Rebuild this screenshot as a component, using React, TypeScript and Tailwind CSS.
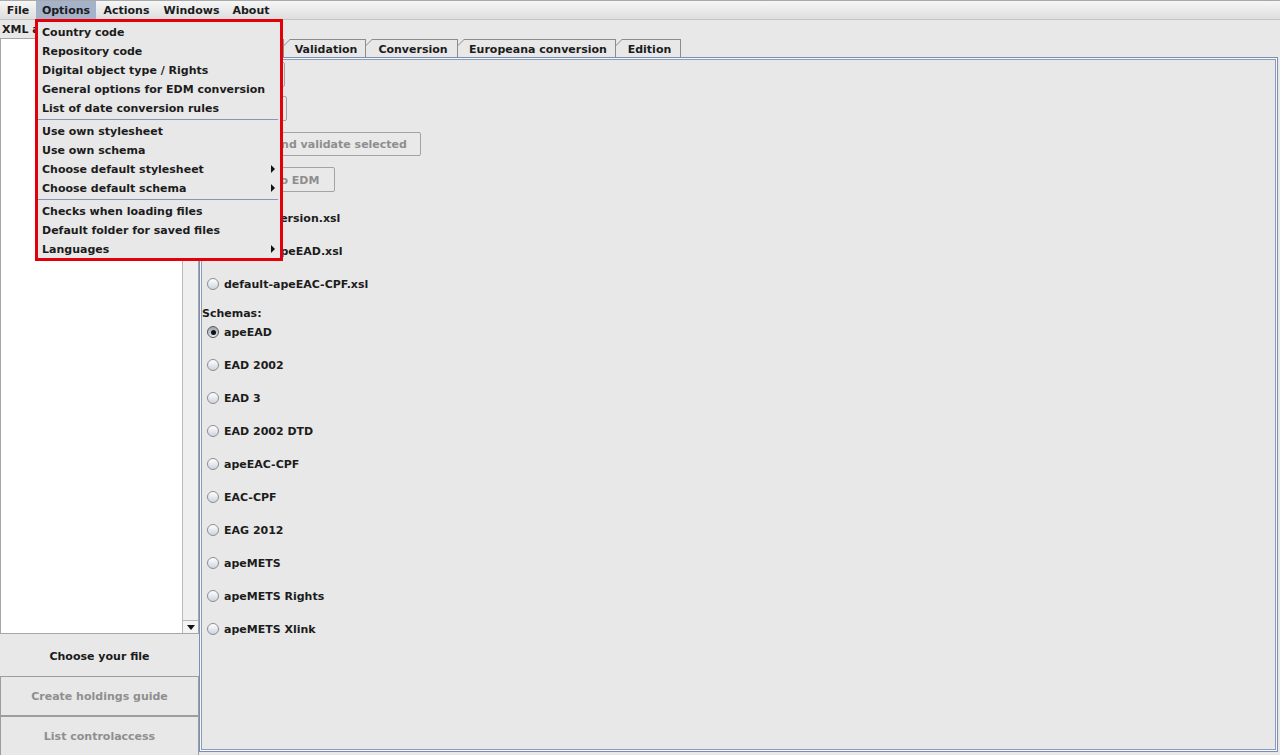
import React from "react";

const menuTop = [
  { label: "File", w: "w-[36px]", active: false },
  { label: "Options", w: "w-[60px]", active: true },
  { label: "Actions", w: "w-[61px]", active: false },
  { label: "Windows", w: "w-[69px]", active: false },
  { label: "About", w: "w-[50px]", active: false },
];

type Entry = { label?: string; sub?: boolean; sep?: boolean };
const dropdown: Entry[] = [
  { label: "Country code" },
  { label: "Repository code" },
  { label: "Digital object type / Rights" },
  { label: "General options for EDM conversion" },
  { label: "List of date conversion rules" },
  { sep: true },
  { label: "Use own stylesheet" },
  { label: "Use own schema" },
  { label: "Choose default stylesheet", sub: true },
  { label: "Choose default schema", sub: true },
  { sep: true },
  { label: "Checks when loading files" },
  { label: "Default folder for saved files" },
  { label: "Languages", sub: true },
];

const tabs = [
  { label: "Summary", w: "w-[81px]" },
  { label: "Validation", w: "w-[83px]" },
  { label: "Conversion", w: "w-[93px]" },
  { label: "Europeana conversion", w: "w-[159px]" },
  { label: "Edition", w: "w-[66px]" },
];

const schemas = [
  "apeEAD",
  "EAD 2002",
  "EAD 3",
  "EAD 2002 DTD",
  "apeEAC-CPF",
  "EAC-CPF",
  "EAG 2012",
  "apeMETS",
  "apeMETS Rights",
  "apeMETS Xlink",
];

function Radio({ checked, label }: { checked?: boolean; label: string }) {
  return (
    <div className="flex items-center h-[20px] pl-[5px]">
      <div
        className={
          checked
            ? "w-[12px] h-[12px] rounded-full border border-[#5a5a5a] bg-linear-to-b from-[#9aa3b0] to-[#e4e8ee] flex items-center justify-center"
            : "w-[12px] h-[12px] rounded-full border border-[#8d8d8d] bg-linear-to-b from-[#ffffff] to-[#cdd5e1]"
        }
      >
        {checked && <div className="w-[5px] h-[5px] rounded-full bg-[#111]" />}
      </div>
      <span className="ml-[5px] pt-px">{label}</span>
    </div>
  );
}

function Btn({ label, w, disabled, h, mt }: { label: string; w: string; disabled?: boolean; h: string; mt: string }) {
  return (
    <div
      className={`${w} ${h} ${mt} ml-[5px] border border-[#a3a3a3] rounded-[2px] flex items-center justify-center pt-px bg-[#e9e9e9] ${
        disabled ? "text-[#8e8e8e]" : "text-[#1a1a1a]"
      }`}
    >
      {label}
    </div>
  );
}

export default function App() {
  return (
    <div className="w-[1280px] h-[755px] bg-[#e8e8e8] relative overflow-hidden font-['DejaVu_Sans',sans-serif] font-bold text-[11px] text-[#1c1c1c] leading-none">
      {/* Menu bar */}
      <div className="h-[20px] flex border-t border-t-[#a9a9a9] border-b border-b-[#c4c4c4] bg-linear-to-b from-[#f6f6f6] to-[#dedede]">
        {menuTop.map((m) => (
          <div
            key={m.label}
            className={`${m.w} h-full flex items-center justify-center ${m.active ? "bg-[#a5b3ca]" : ""}`}
          >
            {m.label}
          </div>
        ))}
      </div>

      <div className="flex h-[735px]">
        {/* Left pane */}
        <div className="w-[199px] flex flex-col">
          <div className="h-[18px] pl-[2px] pt-px flex items-center whitespace-nowrap">XML and EAG files</div>
          <div className="h-[596px] flex border border-[#a6a6a6] bg-white">
            <div className="flex-1 bg-white" />
            <div className="w-[16px] bg-[#efefef] border-l border-[#b9b9b9] flex flex-col justify-end">
              <div className="h-[13px] border-t border-[#b9b9b9] flex items-center justify-center bg-[#f4f4f4]">
                <div className="w-0 h-0 border-l-[4px] border-r-[4px] border-t-[5px] border-l-transparent border-r-transparent border-t-[#111]" />
              </div>
            </div>
          </div>
          <div className="h-[42px] pt-[2px] flex items-center justify-center text-[#1a1a1a]">Choose your file</div>
          <div className="h-[40px] border border-[#9d9d9d] pt-px flex items-center justify-center text-[#8f8f8f]">
            Create holdings guide
          </div>
          <div className="h-[39px] border border-[#9d9d9d] border-b-0 pt-px flex items-center justify-center text-[#8f8f8f]">
            List controlaccess
          </div>
        </div>

        {/* Right pane */}
        <div className="flex-1 flex flex-col">
          <div className="mt-[19px] h-[18px] flex pl-[4px]">
            {tabs.map((t) => (
              <div
                key={t.label}
                className={`${t.w} h-full -mr-px bg-[#8c8c8c] [clip-path:polygon(7px_0,100%_0,100%_100%,0_100%,0_7px)] pt-px px-px`}
              >
                <div className="w-full h-full bg-[#e8e8e8] [clip-path:polygon(6px_0,100%_0,100%_100%,0_100%,0_6px)] flex items-center justify-center pl-[3px] pt-px">
                  {t.label}
                </div>
              </div>
            ))}
          </div>
          <div className="flex-1 mr-[2px] mb-[3px] border border-[#7c8eb1] flex">
            <div className="flex-1 border border-[#f6f7fa] flex">
              <div className="flex-1 border border-[#8a9bbb] flex flex-col">
                <Btn label="Validate" w="w-[78px]" h="h-[25px]" mt="mt-[2px]" />
                <Btn label="Convert" w="w-[80px]" h="h-[25px]" mt="mt-[9px]" />
                <Btn label="Convert and validate selected" w="w-[214px]" h="h-[24px]" mt="mt-[11px]" disabled />
                <Btn label="Convert to EDM" w="w-[128px]" h="h-[25px]" mt="mt-[11px]" disabled />
                <div className="mt-[16px] flex flex-col gap-[13px]">
                  <Radio label="default-version.xsl" />
                  <Radio label="default-apeEAD.xsl" />
                  <Radio label="default-apeEAC-CPF.xsl" />
                </div>
                <div className="mt-[11px] h-[16px] pt-px flex items-center">Schemas:</div>
                <div className="mt-[1px] flex flex-col gap-[13px]">
                  {schemas.map((s, i) => (
                    <Radio key={s} label={s} checked={i === 0} />
                  ))}
                </div>
              </div>
            </div>
          </div>
        </div>
      </div>

      {/* Dropdown menu with red highlight */}
      <div className="absolute left-[35px] top-[19px] w-[248px] h-[242px] border-[3px] border-[#e2000b] bg-[#e8e8e8] flex flex-col">
        {dropdown.map((d, i) =>
          d.sep ? (
            <div key={i} className="h-[4px] pt-[2px]">
              <div className="h-px bg-[#8596b8] mr-[2px]" />
            </div>
          ) : (
            <div key={i} className="h-[19px] pl-[4px] pt-[2px] flex items-center relative">
              {d.label}
              {d.sub && (
                <div className="absolute right-[5px] top-[6px] w-0 h-0 border-t-[4px] border-b-[4px] border-l-[4px] border-t-transparent border-b-transparent border-l-[#111]" />
              )}
            </div>
          )
        )}
      </div>
    </div>
  );
}
